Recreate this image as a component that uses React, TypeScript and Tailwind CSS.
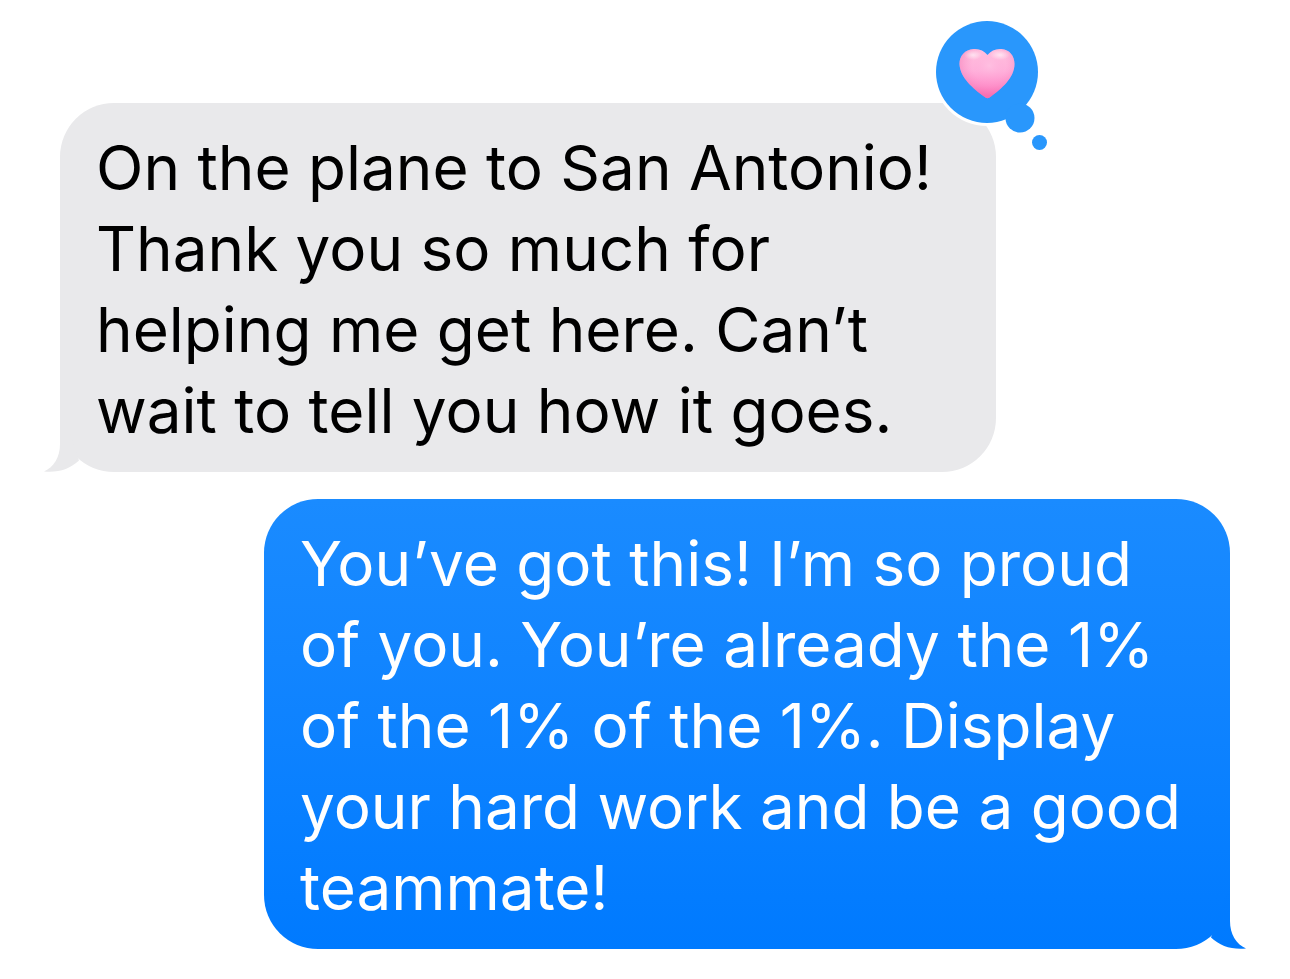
import type { ReactNode } from "react";
import clsx from "clsx";

type Message = {
  id: number;
  from: "them" | "me";
  text: string;
  reaction?: ReactNode;
};

const HEART =
  "M57.5 39C54 34.5 49 32.5 43.5 33C35 33.5 29.5 40 29.5 48C30 62 44 73 54 80.5Q57.5 84 61 80.5C71 73 84.5 62 84.5 48C84.5 40 79.500 33.5 71.5 33C66 32.5 61 34.500 57.5 39Z";

function HeartReaction() {
  return (
    <svg
      role="img"
      aria-label="Loved"
      viewBox="0 0 120 140"
      className="absolute -top-[87px] -right-[54px] h-[140px] w-[120px]"
    >
      <defs>
        <linearGradient id="heart" x1="0" y1="0" x2="0" y2="1">
          <stop offset="0" stopColor="#ffc6e0" />
          <stop offset="0.45" stopColor="#ffb3dc" />
          <stop offset="0.75" stopColor="#ff90cb" />
          <stop offset="1" stopColor="#ff64b0" />
        </linearGradient>
        <radialGradient id="heart-edge" cx="0.54" cy="0.34" r="0.6">
          <stop offset="0" stopColor="#ffc4e4" stopOpacity="0.6" />
          <stop offset="0.5" stopColor="#ff9fd2" stopOpacity="0.15" />
          <stop offset="1" stopColor="#f272b0" stopOpacity="0.6" />
        </radialGradient>
        <radialGradient id="heart-shine">
          <stop offset="0" stopColor="#fff" stopOpacity="0.6" />
          <stop offset="1" stopColor="#fff" stopOpacity="0" />
        </radialGradient>
      </defs>
      <circle cx="57" cy="56" r="54" fill="#fff" />
      <circle cx="57" cy="56" r="51" fill="#2997fc" />
      <circle cx="90" cy="102" r="14.5" fill="#2997fc" />
      <circle cx="109.5" cy="126.5" r="7.5" fill="#2997fc" />
      <path d={HEART} fill="url(#heart)" />
      <path d={HEART} fill="url(#heart-edge)" />
      <ellipse cx="43" cy="39" rx="9" ry="5" fill="url(#heart-shine)" />
      <ellipse cx="70" cy="39" rx="10" ry="5" fill="url(#heart-shine)" />
    </svg>
  );
}

// Points left by default, mirrored for outgoing messages
function Tail({ mine }: { mine: boolean }) {
  return (
    <svg
      aria-hidden="true"
      viewBox="0 0 36 56"
      className={clsx(
        "absolute bottom-0 h-[56px] w-[36px]",
        mine ? "-right-4 -scale-x-100" : "-left-4"
      )}
    >
      <defs>
        <linearGradient id="tail-blue" x1="0" y1="0" x2="0" y2="56" gradientUnits="userSpaceOnUse">
          <stop offset="0" stopColor="#037cff" />
          <stop offset="1" stopColor="#007aff" />
        </linearGradient>
      </defs>
      <path
        fill={mine ? "url(#tail-blue)" : "#e9e9eb"}
        d="M16 0V28C16 41 10 51 0 55.5C14 57 26 53 35 44.5L20 0Z"
      />
    </svg>
  );
}

const messages: Message[] = [
  {
    id: 1,
    from: "them",
    text: "On the plane to San Antonio! Thank you so much for helping me get here. Can’t wait to tell you how it goes.",
    reaction: <HeartReaction />,
  },
  {
    id: 2,
    from: "me",
    text: "You’ve got this! I’m so proud of you. You’re already the 1% of the 1% of the 1%. Display your hard work and be a good teammate!",
  },
];

function Bubble({ message }: { message: Message }) {
  const mine = message.from === "me";

  return (
    <li
      className={clsx(
        "relative rounded-[54px] px-9 pt-6 pb-[21px]",
        mine
          ? "max-w-[966px] self-end bg-linear-to-b from-[#1a8bff] to-[#007aff] text-white"
          : "max-w-[936px] self-start bg-[#e9e9eb] text-black"
      )}
    >
      <Tail mine={mine} />
      <p className="relative">{message.text}</p>
      {message.reaction}
    </li>
  );
}

export default function App() {
  return (
    <main className="min-h-screen bg-white px-[60px] pt-[103px] pb-[30px] font-['Inter',sans-serif] text-[62px] leading-[81px]">
      <ul className="flex flex-col gap-[27px]">
        {messages.map((message) => (
          <Bubble key={message.id} message={message} />
        ))}
      </ul>
    </main>
  );
}
